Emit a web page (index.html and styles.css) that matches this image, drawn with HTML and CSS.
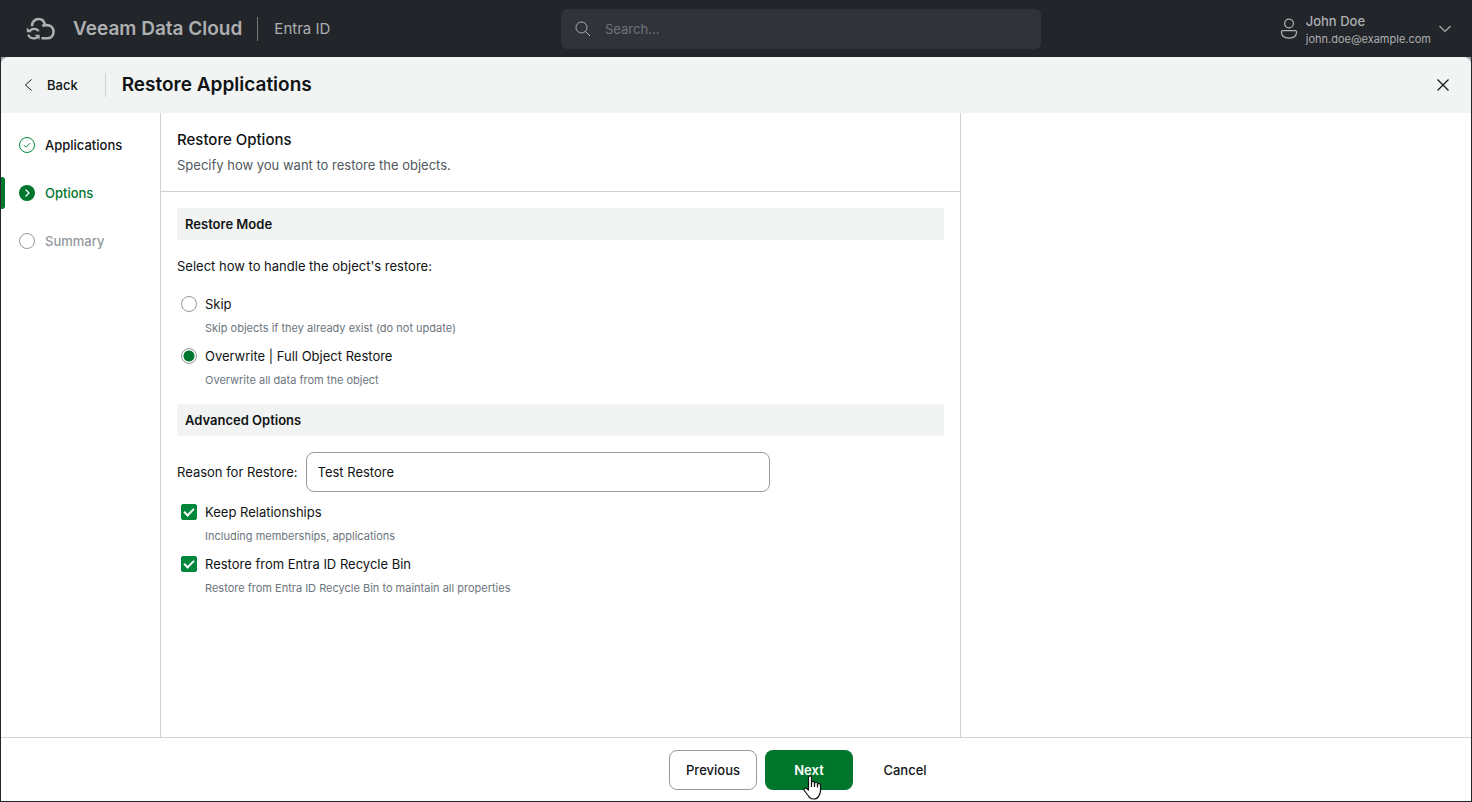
FILE: index.html
```html
<!DOCTYPE html>
<html lang="en">
<head>
    <meta charset="utf-8">
    <meta name="viewport" content="width=device-width, initial-scale=1">
    <title>Restore Applications</title>
    <link rel="stylesheet" href="styles.css">
</head>
<body>
    <header class="topbar">
        <div class="brand">
            <svg class="brand-logo" width="30" height="24" viewBox="0 0 30 24" fill="none" stroke="currentColor" stroke-width="2.6">
                <path d="M6 9.200C6 4.800 9 2 12.500 2c3.600 0 5.900 2.400 6.400 6.200"/>
                <path d="M16.200 8.900c1.200-.6 2.600-.8 4.300-.8 4.300 0 7 2.700 7 6.600 0 4-2.700 6.600-6.400 6.600h-5.600"/>
                <path d="M12.600 14.300c-.8-1.500-2.400-2.400-4.200-2.400-2.200 0-4 1-5 2.600" stroke-width="2.200"/>
                <path d="M2.200 17.700c.8 2.200 3 3.700 5.600 3.700 2.300 0 4-1 5-2.600" stroke-width="2.200"/>
                <path d="M.8 10.400v4.900h4.900zM13.600 22.800v-5.100H8.600z" fill="currentColor" stroke="none"/>
            </svg>
            <span class="brand-name">Veeam Data Cloud</span>
            <span class="brand-product">Entra ID</span>
        </div>
        <label class="search">
            <svg width="16" height="16" viewBox="0 0 16 16" fill="none" stroke="currentColor">
                <circle cx="6.500" cy="6.500" r="5.500"/>
                <path d="M10.500 10.500l4.500 4.500"/>
            </svg>
            <input class="search-input" type="search" placeholder="Search..." aria-label="Search">
        </label>
        <button class="user" type="button">
            <svg width="18" height="22" viewBox="0 0 18 22" fill="none" stroke="currentColor" stroke-width="1.200">
                <circle cx="9" cy="5.500" r="4.400"/>
                <path d="M2.600 12.600h12.800c.7 0 1.200.5 1.200 1.200 0 3.900-3 6.300-7.600 6.300s-7.600-2.400-7.600-6.300c0-.7.5-1.200 1.200-1.200z"/>
            </svg>
            <span class="user-text">
                <span class="user-name">John Doe</span>
                <span class="user-mail">john.doe@example.com</span>
            </span>
            <svg class="user-arrow" width="12" height="8" viewBox="0 0 12 8" fill="none" stroke="currentColor" stroke-width="1.200">
                <path d="M.5 1L6 6.500 11.500 1"/>
            </svg>
        </button>
    </header>

    <div class="frame">
        <div class="wizard">
            <div class="wizard-head">
                <button class="back" type="button">
                    <svg width="8" height="14" viewBox="0 0 8 14" fill="none" stroke="currentColor">
                        <path d="M7.500 1.500L1.500 7l6 5.500"/>
                    </svg>
                    Back
                </button>
                <h1 class="wizard-title">Restore Applications</h1>
                <button class="close" type="button" aria-label="Close">
                    <svg width="12" height="12" viewBox="0 0 12 12" fill="none" stroke="currentColor" stroke-width="1.200">
                        <path d="M.5.5l11 11M11.500.5l-11 11"/>
                    </svg>
                </button>
            </div>

            <div class="wizard-body">
                <nav class="steps">
                    <a class="step" href="#">
                        <svg width="16" height="16" viewBox="0 0 16 16" fill="none" stroke="#00873a">
                            <circle cx="8" cy="8" r="7.500"/>
                            <path d="M5 8.200l2 2 4-4"/>
                        </svg>
                        Applications
                    </a>
                    <a class="step step-active" href="#" aria-current="step">
                        <svg width="16" height="16" viewBox="0 0 16 16" fill="none">
                            <circle cx="8" cy="8" r="8" fill="#00752c"/>
                            <path d="M6.500 4.500L10 8l-3.500 3.500" stroke="#fff" stroke-width="1.200"/>
                        </svg>
                        Options
                    </a>
                    <a class="step step-next" href="#">
                        <svg width="16" height="16" viewBox="0 0 16 16" fill="none" stroke="currentColor">
                            <circle cx="8" cy="8" r="7.500"/>
                        </svg>
                        Summary
                    </a>
                </nav>

                <main class="content">
                    <div class="content-head">
                        <h2 class="content-title">Restore Options</h2>
                        <p class="content-text">Specify how you want to restore the objects.</p>
                    </div>
                    <form class="options" id="options">
                        <h3 class="section">Restore Mode</h3>
                        <p class="question">Select how to handle the object's restore:</p>
                        <div class="option">
                            <input class="radio" type="radio" name="mode" id="skip">
                            <label for="skip">Skip</label>
                            <p class="hint">Skip objects if they already exist (do not update)</p>
                        </div>
                        <div class="option">
                            <input class="radio" type="radio" name="mode" id="overwrite" checked>
                            <label for="overwrite">Overwrite | Full Object Restore</label>
                            <p class="hint">Overwrite all data from the object</p>
                        </div>

                        <h3 class="section section-advanced">Advanced Options</h3>
                        <div class="reason">
                            <label for="reason">Reason for Restore:</label>
                            <input class="reason-input" type="text" id="reason" value="Test Restore">
                        </div>
                        <div class="option">
                            <input class="check" type="checkbox" id="keep" checked>
                            <label for="keep">Keep Relationships</label>
                            <p class="hint">Including memberships, applications</p>
                        </div>
                        <div class="option">
                            <input class="check" type="checkbox" id="recycle" checked>
                            <label for="recycle">Restore from Entra ID Recycle Bin</label>
                            <p class="hint">Restore from Entra ID Recycle Bin to maintain all properties</p>
                        </div>
                    </form>
                </main>
            </div>

            <footer class="wizard-foot">
                <button class="btn btn-outline" type="button">Previous</button>
                <button class="btn btn-primary" type="submit" form="options">
                    Next
                    <svg class="cursor" width="19" height="25" viewBox="0 0 19 25" fill="#fff" stroke="#111" stroke-width="1.200" stroke-linejoin="round">
                        <path d="M5.500 15V2.500C5.500.4 8.500.4 8.500 2.500V9V7.500c0-1.500 3-1.500 3 0V9.500V8.300c0-1.400 3-1.400 3 0v2.200-1c0-1.300 3-1.300 3 .2V16c0 2-1 3-1.500 4.500-.8 2.200-2.600 3.500-5.500 3.500-2.500 0-4-1-5-3L1.200 15.500C.3 13.600 2.300 12.300 3.700 13.500z"/>
                        <path d="M8.500 8v4M11.500 8v4M14.500 9v3.500" fill="none"/>
                    </svg>
                </button>
                <button class="btn" type="button">Cancel</button>
            </footer>
        </div>
    </div>
</body>
</html>
```

FILE: styles.css
```css
* {
    box-sizing: border-box;
}
body {
    display: flex;
    flex-direction: column;
    min-height: 100vh;
    margin: 0;
    background-color: #22252a;
    color: #101314;
    font-family: Inter, "Liberation Sans", sans-serif;
    font-size: 13px;
    line-height: 20px;
}
h1, h2, h3, p {
    margin: 0;
}
button, input {
    font: inherit;
    color: inherit;
}
button {
    padding: 0;
    border: 0;
    background: none;
    cursor: pointer;
}
svg {
    flex: none;
}

/* top bar */
.topbar {
    display: grid;
    grid-template-columns: 1fr 480px 410px;
    align-items: center;
    height: 57px;
    padding: 0 21px 0 26px;
    color: #adafb1;
}
.brand {
    display: flex;
    align-items: center;
}
.brand-name {
    margin-left: 17px;
    padding-right: 15px;
    border-right: 1px solid #75787b;
    font-size: 19px;
    font-weight: 600;
    line-height: 24px;
}
.brand-product {
    padding-left: 16px;
    font-size: 15px;
}
.search {
    display: flex;
    align-items: center;
    gap: 14px;
    height: 40px;
    padding: 0 14px;
    border-radius: 6px;
    background-color: #30333a;
}
.search-input {
    flex: 1;
    min-width: 0;
    padding: 0;
    border: 0;
    outline: 0;
    background: none;
}
.search-input::placeholder {
    color: #6d757d;
    opacity: 1;
}
.user {
    display: flex;
    align-items: center;
    justify-self: end;
    gap: 8px;
    text-align: left;
}
.user-text {
    display: flex;
    flex-direction: column;
    padding-top: 2px;
    line-height: 18px;
}
.user-name {
    font-weight: 500;
}
.user-mail {
    font-size: 11px;
}

/* wizard */
.frame {
    display: flex;
    flex: 1;
    padding: 0 1px 1px;
    background: linear-gradient(#a3a5a8 8px, #22252a 8px) 1px 0 / calc(100% - 2px) 100% no-repeat;
}
.wizard {
    display: flex;
    flex: 1;
    flex-direction: column;
    min-width: 0;
    border-radius: 8px 8px 0 0;
    background-color: #fff;
}
.wizard-head {
    display: flex;
    align-items: center;
    height: 56px;
    padding: 0 22px 0 23px;
    border-radius: 8px 8px 0 0;
    background-color: #f2f4f4;
}
.back {
    display: flex;
    align-items: center;
    gap: 15px;
    height: 24px;
    padding-right: 27px;
    border-right: 1px solid #ced3d5;
    font-weight: 500;
}
.wizard-title {
    padding-left: 16px;
    font-size: 19px;
    font-weight: 600;
    line-height: 24px;
}
.close {
    display: flex;
    margin-left: auto;
}
.wizard-body {
    display: flex;
    flex: 1;
}

.steps {
    display: flex;
    flex: 0 0 160px;
    flex-direction: column;
    gap: 16px;
    padding-top: 16px;
    border-right: 1px solid #ced3d5;
}
.step {
    position: relative;
    display: flex;
    align-items: center;
    gap: 10px;
    height: 32px;
    padding-left: 18px;
    color: #101314;
    font-weight: 500;
    text-decoration: none;
}
.step-active {
    color: #00752c;
}
.step-active::before {
    content: "";
    position: absolute;
    top: 0;
    bottom: 0;
    left: 0;
    width: 4px;
    border-radius: 0 3px 3px 0;
    background-color: #00752c;
}
.step-next {
    color: #93999d;
}

.content {
    flex: 0 1 800px;
    border-right: 1px solid #ced3d5;
}
.content-head {
    padding: 16px;
    border-bottom: 1px solid #ced3d5;
}
.content-title {
    margin-bottom: 4px;
    font-size: 15px;
    font-weight: 500;
    line-height: 22px;
}
.content-text {
    color: #505860;
}
.options {
    padding: 16px;
}
.section {
    padding: 6px 8px;
    background-color: #f2f4f4;
    font-size: 13px;
    font-weight: 600;
}
.section-advanced {
    margin-top: 12px;
}
.question {
    margin: 16px 0;
}
.option {
    display: grid;
    grid-template-columns: 16px 1fr;
    column-gap: 8px;
    align-items: center;
    padding-left: 4px;
    line-height: 24px;
}
.option + .option {
    margin-top: 4px;
}
.hint {
    grid-column: 2;
    color: #6d757d;
    font-size: 11px;
}
.radio, .check {
    width: 16px;
    height: 16px;
    margin: 0;
    appearance: none;
}
.radio {
    border: 1px solid #93999d;
    border-radius: 50%;
}
.radio:checked {
    background: radial-gradient(circle, #00752c 5px, #fff 6px);
}
.check {
    border: 1px solid #93999d;
    border-radius: 2px;
}
.check:checked {
    display: grid;
    border-color: #00873a;
    background-color: #00873a;
}
.check:checked::before {
    content: "";
    place-self: center;
    width: 8px;
    height: 4px;
    margin-bottom: 2px;
    border: solid #fff;
    border-width: 0 0 2px 2px;
    transform: rotate(-45deg);
}
.reason {
    display: flex;
    align-items: center;
    gap: 8px;
    margin: 16px 0 8px;
}
.reason-input {
    flex: 0 1 464px;
    min-width: 0;
    height: 40px;
    padding: 0 11px;
    border: 1px solid #93999d;
    border-radius: 8px;
    background-color: #fff;
}

.wizard-foot {
    display: flex;
    justify-content: center;
    gap: 8px;
    padding: 12px 0 11px 146px;
    border-top: 1px solid #ced3d5;
}
.btn {
    width: 88px;
    height: 40px;
    border: 1px solid transparent;
    border-radius: 8px;
    font-weight: 500;
}
.btn-outline {
    border-color: #93999d;
}
.btn-primary {
    position: relative;
    background-color: #00752c;
    color: #fff;
    font-weight: 600;
}
/* hand pointer over the Next button */
.cursor {
    position: absolute;
    top: 24px;
    left: 37px;
}
```
